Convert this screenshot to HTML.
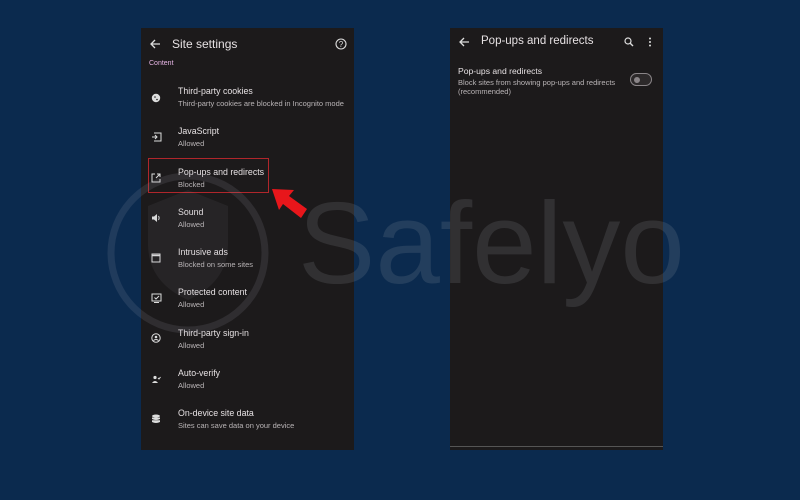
<!DOCTYPE html>
<html><head><meta charset="utf-8"><style>
*{margin:0;padding:0;box-sizing:border-box}
body{width:800px;height:500px;background:#0b2a4e;position:relative;overflow:hidden;font-family:"Liberation Sans",sans-serif}
.panel{position:absolute;top:28px;width:213px;height:422px;background:#1c1a1b}
#L{left:141px}
#R{left:450px}
.t{position:absolute;color:#e6e1e3;white-space:nowrap}
.s{position:absolute;color:#b9b4b6;font-size:7.5px;white-space:nowrap}
.ic{position:absolute;left:10px}
.wm{position:absolute;left:298px;top:176px;font-size:116px;color:rgba(160,165,175,0.16);font-family:"Liberation Sans",sans-serif}
</style></head><body>
<div class="panel" id="L">
  <svg style="position:absolute;left:9px;top:11px" width="11" height="10" viewBox="0 0 11 10"><path d="M10 5H1.5M5 1L1 5l4 4" stroke="#ddd" stroke-width="1.3" fill="none"/></svg>
  <div class="t" style="left:31px;top:9px;font-size:12px">Site settings</div>
  <svg style="position:absolute;left:194px;top:10px" width="12" height="12" viewBox="0 0 12 12"><circle cx="6" cy="6" r="5" stroke="#ddd" stroke-width="1.1" fill="none"/><text x="6" y="8.8" font-size="8" fill="#ddd" text-anchor="middle" font-family="Liberation Sans">?</text></svg>
  <div class="t" style="left:8px;top:32px;font-size:7px;color:#e8b6e6">Content</div>

  <div class="t" style="left:37px;top:58px;font-size:8.8px">Third-party cookies</div>
  <div class="s" style="left:37px;top:71px">Third-party cookies are blocked in Incognito mode</div>
  <svg class="ic" style="top:65px" width="10" height="10" viewBox="0 0 10 10"><circle cx="5" cy="5" r="4.2" fill="#ddd"/><circle cx="4" cy="4" r=".8" fill="#1c1a1b"/><circle cx="6" cy="6.5" r=".8" fill="#1c1a1b"/></svg>

  <div class="t" style="left:37px;top:98px;font-size:8.8px">JavaScript</div>
  <div class="s" style="left:37px;top:111px">Allowed</div>
  <svg class="ic" style="top:104px" width="11" height="10" viewBox="0 0 11 10"><path d="M3 1h7v8H3M1 5h5M4 3l2 2-2 2" stroke="#ddd" stroke-width="1" fill="none"/></svg>

  <div style="position:absolute;left:7px;top:130px;width:121px;height:35px;border:1px solid #b0262b"></div>
  <div class="t" style="left:37px;top:139px;font-size:8.8px">Pop-ups and redirects</div>
  <div class="s" style="left:37px;top:152px">Blocked</div>
  <svg class="ic" style="top:145px" width="10" height="10" viewBox="0 0 10 10"><path d="M4 1H1v8h8V6M5 5l4-4M6 1h3v3" stroke="#ddd" stroke-width="1" fill="none"/></svg>

  <div class="t" style="left:37px;top:179px;font-size:8.8px">Sound</div>
  <div class="s" style="left:37px;top:192px">Allowed</div>
  <svg class="ic" style="top:185px" width="10" height="10" viewBox="0 0 10 10"><path d="M1 3.5h2l3-2.5v8L3 6.5H1z" fill="#ddd"/><path d="M7.5 3q1.2 2 0 4" stroke="#ddd" fill="none"/></svg>

  <div class="t" style="left:37px;top:219px;font-size:8.8px">Intrusive ads</div>
  <div class="s" style="left:37px;top:232px">Blocked on some sites</div>
  <svg class="ic" style="top:225px" width="10" height="10" viewBox="0 0 10 10"><rect x="1" y="1" width="8" height="8" stroke="#ddd" fill="none"/><path d="M1 2.5h8" stroke="#ddd" stroke-width="1.5"/></svg>

  <div class="t" style="left:37px;top:259px;font-size:8.8px">Protected content</div>
  <div class="s" style="left:37px;top:272px">Allowed</div>
  <svg class="ic" style="top:265px" width="11" height="10" viewBox="0 0 11 10"><rect x="1" y="1" width="9" height="7" stroke="#ddd" fill="none"/><path d="M3.5 4.5l1.5 1.5 3-3M3 9.5h5" stroke="#ddd" fill="none"/></svg>

  <div class="t" style="left:37px;top:300px;font-size:8.8px">Third-party sign-in</div>
  <div class="s" style="left:37px;top:313px">Allowed</div>
  <svg class="ic" style="top:305px" width="10" height="10" viewBox="0 0 10 10"><circle cx="5" cy="5" r="4.2" stroke="#ddd" fill="none"/><circle cx="5" cy="4" r="1.3" fill="#ddd"/><path d="M2.5 7.5q2.5-2 5 0" stroke="#ddd" fill="none"/></svg>

  <div class="t" style="left:37px;top:340px;font-size:8.8px">Auto-verify</div>
  <div class="s" style="left:37px;top:353px">Allowed</div>
  <svg class="ic" style="top:346px" width="10" height="10" viewBox="0 0 10 10"><circle cx="4" cy="3.5" r="1.6" fill="#ddd"/><path d="M1 9q3-4 6 0" fill="#ddd"/><path d="M7 4l1 1 1.5-2" stroke="#ddd" fill="none"/></svg>

  <div class="t" style="left:37px;top:380px;font-size:8.8px">On-device site data</div>
  <div class="s" style="left:37px;top:393px">Sites can save data on your device</div>
  <svg class="ic" style="top:386px" width="10" height="10" viewBox="0 0 10 10"><ellipse cx="5" cy="2" rx="4" ry="1.5" fill="#ddd"/><path d="M1 3.5v1.5q4 2 8 0V3.5M1 6.2v1.8q4 2 8 0V6.2" fill="#ddd"/></svg>
</div>

<div class="panel" id="R">
  <div style="position:absolute;left:0;top:418px;width:213px;height:1px;background:#555"></div>
  <svg style="position:absolute;left:9px;top:9px" width="11" height="10" viewBox="0 0 11 10"><path d="M10 5H1.5M5 1L1 5l4 4" stroke="#ddd" stroke-width="1.3" fill="none"/></svg>
  <div class="t" style="left:31px;top:7px;font-size:11.5px">Pop-ups and redirects</div>
  <svg style="position:absolute;left:174px;top:9px" width="10" height="10" viewBox="0 0 10 10"><circle cx="4" cy="4" r="3" stroke="#ddd" stroke-width="1.2" fill="none"/><path d="M6.2 6.2L9 9" stroke="#ddd" stroke-width="1.4"/></svg>
  <svg style="position:absolute;left:198px;top:9px" width="4" height="10" viewBox="0 0 4 10"><circle cx="2" cy="1.5" r="1" fill="#ddd"/><circle cx="2" cy="5" r="1" fill="#ddd"/><circle cx="2" cy="8.5" r="1" fill="#ddd"/></svg>
  <div class="t" style="left:8px;top:38px;font-size:8.6px">Pop-ups and redirects</div>
  <div class="s" style="left:8px;top:50px">Block sites from showing pop-ups and redirects</div>
  <div class="s" style="left:8px;top:59px">(recommended)</div>
  <div style="position:absolute;left:180px;top:45px;width:22px;height:13px;border:1.3px solid #8a8588;border-radius:7px;background:#2c292a"></div>
  <div style="position:absolute;left:184px;top:49px;width:6px;height:6px;border-radius:50%;background:#8a8588"></div>
</div>

<svg style="position:absolute;left:0;top:0" width="800" height="500">
  <circle cx="188" cy="253" r="77" stroke="rgba(160,165,175,0.14)" stroke-width="7" fill="none"/>
  <path d="M188 190l-40 16v38q0 38 40 56q40-18 40-56v-38z" fill="rgba(160,165,175,0.08)"/>
  <polygon points="272,189 294,190 289,196 307,209 301,218 283,204 279,210" fill="#e8161b"/>
</svg>
<div class="wm">Safelyo</div>
</body></html>
